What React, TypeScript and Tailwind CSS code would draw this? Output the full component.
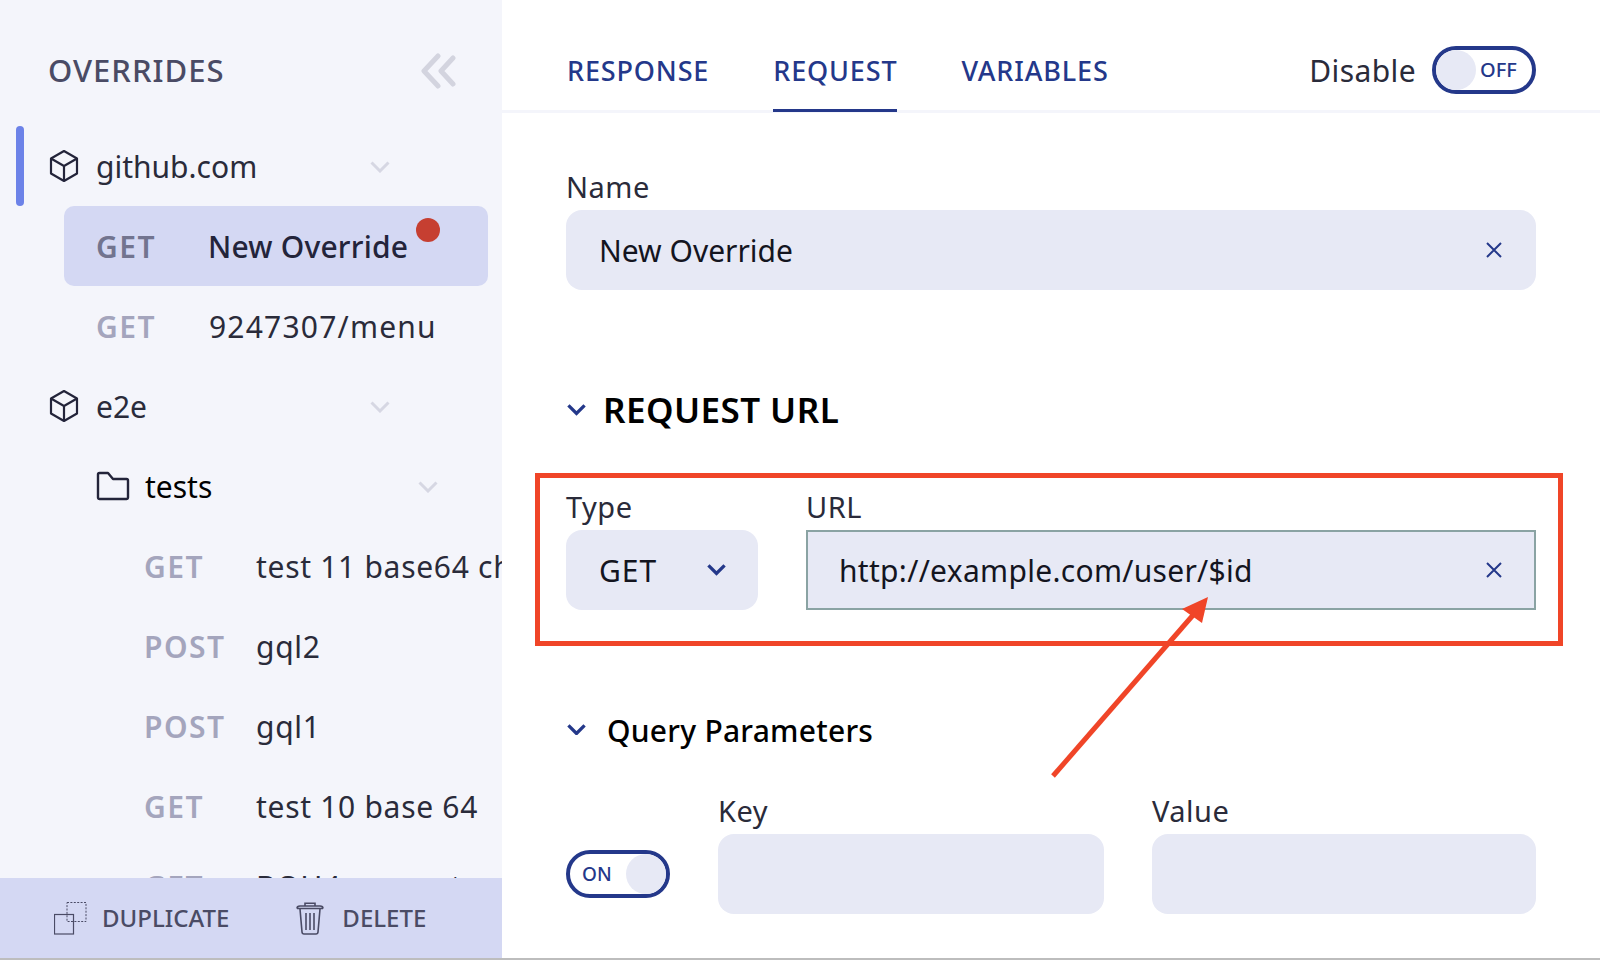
const Cube = () => (
  <svg width="30" height="34" viewBox="0 0 30 34" fill="none" stroke="#23243a" strokeWidth="2.2" strokeLinejoin="round" className="shrink-0">
    <path d="M15 2 L28 9.5 V24.5 L15 32 L2 24.5 V9.5 Z" />
    <path d="M2 9.5 L15 17 L28 9.5 M15 17 V32" />
  </svg>
);
const Folder = () => (
  <svg width="34" height="30" viewBox="0 0 34 30" fill="none" stroke="#23243a" strokeWidth="2.4" strokeLinejoin="round" className="shrink-0">
    <path d="M3.5 2 H12 L17 8 H30.5 A1.5 1.5 0 0 1 32 9.5 V26.5 A1.5 1.5 0 0 1 30.5 28 H3.5 A1.5 1.5 0 0 1 2 26.5 V3.5 A1.5 1.5 0 0 1 3.5 2 Z" />
  </svg>
);
const Chev = ({ color = "#d6d7e3", w = 20, sw = 3 }: { color?: string; w?: number; sw?: number }) => (
  <svg width={w} height={w * 0.62} viewBox="0 0 20 12.4" fill="none" stroke={color} strokeWidth={sw} className="shrink-0">
    <path d="M1.5 1.5 L10 10 L18.5 1.5" />
  </svg>
);
const Close = () => (
  <svg width="16" height="16" viewBox="0 0 16 16" fill="none" stroke="#24388a" strokeWidth="2" className="shrink-0">
    <path d="M1 1 L15 15 M15 1 L1 15" />
  </svg>
);
const font = "font-['Noto_Sans',sans-serif]";

const Method = ({ m, sel }: { m: string; sel?: boolean }) => (
  <span className={`w-[112px] shrink-0 text-[30px] font-semibold tracking-[1.5px] ${sel ? "text-[#72748f]" : "text-[#a4a5bd]"}`}>{m}</span>
);
const Group = ({ label, icon, indent, gap = "ml-[17px]", chevAt, tone = "text-[#2a2b3a]" }: { label: string; indent: number; icon: React.ReactNode; gap?: string; chevAt: string; tone?: string }) => (
  <div className="h-20 shrink-0 flex items-center relative" style={{ paddingLeft: indent }}>
    {icon}
    <span className={`${gap} text-[30px] whitespace-nowrap ${tone}`}>{label}</span>
    <span className={`absolute ${chevAt} top-[35px]`}><Chev /></span>
  </div>
);
const Leaf = ({ m, name }: { m: string; name: string }) => (
  <div className="h-20 shrink-0 flex items-center pl-[144px] whitespace-nowrap">
    <Method m={m} />
    <span className="text-[30px] tracking-[0.7px] text-[#2a2b3a]">{name}</span>
  </div>
);

const Sidebar = () => (
  <aside className="w-[502px] shrink-0 h-full bg-[#f4f5fb] flex flex-col overflow-hidden relative">
    <div className="h-[126px] shrink-0 flex items-start justify-between pt-[49px] pl-[48px] pr-[46px]">
      <span className="text-[31px] leading-[42px] tracking-[1px] font-medium text-[#4a4b65]">OVERRIDES</span>
      <svg width="36" height="36" viewBox="0 0 36 36" fill="none" stroke="#d3d4df" strokeWidth="5" strokeLinecap="round" strokeLinejoin="round" className="mt-[4px]">
        <path d="M18 3 L4 18 L18 33 M33 5 L21 18 L33 31" />
      </svg>
    </div>
    <div className="flex-1 min-h-0 flex flex-col overflow-hidden relative">
      <span className="absolute left-[16px] top-0 w-2 h-20 rounded-full bg-[#6c82e8]" />
      <Group label="github.com" indent={49} icon={<Cube />} chevAt="left-[370px]" />
      <div className="h-20 shrink-0 ml-[64px] mr-[14px] bg-[#d4d8f3] rounded-[10px] flex items-center pl-[32px] relative whitespace-nowrap">
        <Method m="GET" sel />
        <span className="text-[30px] tracking-[0.2px] font-medium text-[#23243a]">New Override</span>
        <span className="absolute left-[352px] top-[12px] w-6 h-6 rounded-full bg-[#c63f31]" />
      </div>
      <div className="h-20 shrink-0 flex items-center pl-[96px] whitespace-nowrap">
        <Method m="GET" />
        <span className="ml-[1px] text-[30px] tracking-[1.2px] text-[#2a2b3a]">9247307/menu</span>
      </div>
      <Group label="e2e" indent={49} icon={<Cube />} chevAt="left-[370px]" />
      <Group label="tests" indent={96} icon={<Folder />} gap="ml-[15px]" chevAt="left-[418px]" tone="text-black" />
      <Leaf m="GET" name="test 11 base64 changes" />
      <Leaf m="POST" name="gql2" />
      <Leaf m="POST" name="gql1" />
      <Leaf m="GET" name="test 10 base 64" />
      <Leaf m="GET" name="BOH4 request" />
    </div>
    <div className="h-20 shrink-0 bg-[#d4d8f3] flex items-center pl-[54px] text-[24px] font-medium text-[#4a4b65]">
      <svg width="33" height="33" viewBox="0 0 33 33" fill="none" stroke="#4a4b65" strokeWidth="1" className="shrink-0">
        <rect x="0.5" y="12.5" width="19" height="19.5" strokeWidth="1.2" />
        <rect x="13" y="0.5" width="19" height="19" strokeDasharray="2 1.4" />
      </svg>
      <span className="ml-[15px]">DUPLICATE</span>
      <svg width="28" height="33" viewBox="0 0 28 33" fill="none" stroke="#4a4b65" strokeWidth="1.6" className="shrink-0 ml-[67px]">
        <path d="M1 6.5 H27 M1 6.5 Q1 4 4 4 H24 Q27 4 27 6.5 M9 4 V1.2 H19 V4 M4 7 L6 30 Q6.2 32 8 32 H20 Q21.8 32 22 30 L24 7 M10 11 V28 M14 11 V28 M18 11 V28" />
      </svg>
      <span className="ml-[18px]">DELETE</span>
    </div>
  </aside>
);

const Field = ({ label, className = "", children, boxClass = "" }: { label?: string; className?: string; children?: React.ReactNode; boxClass?: string }) => (
  <div className={`flex flex-col ${className}`}>
    <span className="text-[29px] leading-[38px] h-[38px] tracking-[0.5px] text-[#2a2b3a]">{label}</span>
    <div className={`mt-[4px] h-20 bg-[#e7e9f5] flex items-center text-[30px] text-[#14151f] ${boxClass}`}>{children}</div>
  </div>
);

const Tab = ({ label, active }: { label: string; active?: boolean }) => (
  <div className={`h-[67px] pt-[6px] text-[27px] leading-[40px] tracking-[0.85px] font-medium text-[#24388a] border-b-[3px] ${active ? "border-[#24388a]" : "border-transparent"}`}>{label}</div>
);

const App = () => (
  <div className={`w-[1600px] h-[960px] overflow-hidden bg-white relative flex flex-col ${font}`}>
    <div className="flex flex-1 min-h-0">
      <Sidebar />
      <main className="flex-1 min-w-0 flex flex-col">
        <header className="h-[113px] shrink-0 pt-[45px] pl-[65px] pr-[64px] border-b-[3px] border-[#f4f5fb] flex items-start">
          <div className="flex gap-[64px]">
            <Tab label="RESPONSE" />
            <Tab label="REQUEST" active />
            <Tab label="VARIABLES" />
          </div>
          <div className="ml-auto flex items-center h-[48px] mt-[1px]">
            <span className="text-[30px] tracking-[0.4px] text-[#2a2b3a]">Disable</span>
            <div className="ml-[16px] w-[104px] h-[48px] rounded-full border-[4px] border-[#24388a] flex items-center overflow-hidden">
              <span className="w-[40px] h-[40px] rounded-full bg-[#e7e9f5] shrink-0" />
              <span className="ml-[4px] text-[20px] font-medium text-[#24388a]">OFF</span>
            </div>
          </div>
        </header>
        <div className="pl-[64px] pr-[64px] flex flex-col">
          <Field label="Name" className="mt-[55px]" boxClass="rounded-2xl justify-between pl-[33px] pr-[34px]">
            <span>New Override</span>
            <Close />
          </Field>
          <div className="mt-[96px] flex items-center h-[48px]">
            <span className="ml-[1px]"><Chev color="#24388a" w={19} sw={3.5} /></span>
            <span className="ml-[17px] text-[35px] tracking-[0.45px] font-semibold text-black">REQUEST URL</span>
          </div>
          <div className="mt-[54px] flex gap-[48px]">
            <Field label="Type" className="w-[192px]" boxClass="rounded-2xl justify-between pl-[33px] pr-8">
              <span className="tracking-[1px]">GET</span>
              <Chev color="#24388a" w={19} sw={3.5} />
            </Field>
            <Field label="URL" className="flex-1" boxClass="border-[2px] border-[#8aa3a3] justify-between pl-[31px] pr-[32px]">
              <span className="tracking-[0.3px]">http://example.com/user/$id</span>
              <Close />
            </Field>
          </div>
          <div className="mt-[100px] flex items-center h-[40px]">
            <span className="ml-[1px] mb-[1px]"><Chev color="#24388a" w={19} sw={3.5} /></span>
            <span className="ml-[21px] text-[30px] tracking-[0.25px] font-medium text-black">Query Parameters</span>
          </div>
          <div className="mt-[42px] flex items-end gap-[48px]">
            <div className="w-[104px] h-[48px] mb-[16px] rounded-full border-[4px] border-[#24388a] flex items-center justify-between overflow-hidden">
              <span className="ml-[12px] text-[19px] font-medium text-[#24388a]">ON</span>
              <span className="w-[40px] h-[40px] rounded-full bg-[#e7e9f5]" />
            </div>
            <Field label="Key" className="w-[386px]" boxClass="rounded-2xl" />
            <Field label="Value" className="flex-1" boxClass="rounded-2xl" />
          </div>
        </div>
      </main>
    </div>
    <div className="h-[2px] shrink-0 bg-[#bdbdbd]" />
    <div className="absolute left-[535px] top-[473px] w-[1028px] h-[173px] border-[5px] border-[#f04528] pointer-events-none" />
    <svg className="absolute left-0 top-0 pointer-events-none" width="1600" height="960" fill="none">
      <path d="M1053 776 L1194 614" stroke="#f04528" strokeWidth="5" />
      <path d="M1208 597 L1182 609 L1202 623 Z" fill="#f04528" />
    </svg>
  </div>
);
export default App;
